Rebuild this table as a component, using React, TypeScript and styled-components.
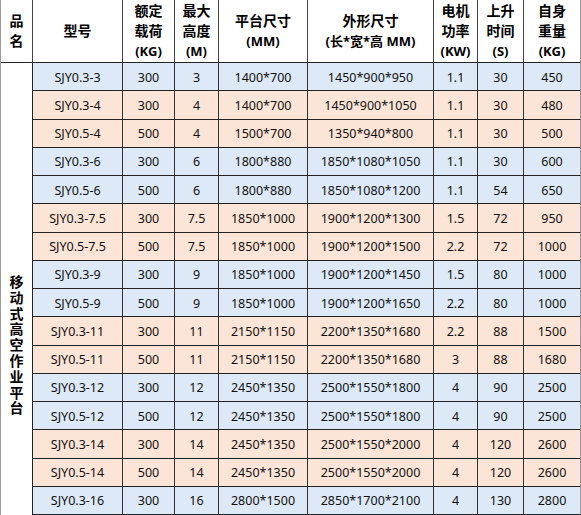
import React from "react";
import styled, { createGlobalStyle } from "styled-components";

const GlobalStyle = createGlobalStyle`
  html, body {
    margin: 0;
    padding: 0;
    background: #ffffff;
    overflow: hidden;
  }
  body {
    font-family: "Noto Sans", "Noto Sans CJK SC", sans-serif;
  }
`;

type Row = {
  model: string;
  load: string;
  height: string;
  platform: string;
  outer: string;
  power: string;
  time: string;
  weight: string;
  tone: "blue" | "peach";
};

const rows: Row[] = [
  { model: "SJY0.3-3", load: "300", height: "3", platform: "1400*700", outer: "1450*900*950", power: "1.1", time: "30", weight: "450", tone: "blue" },
  { model: "SJY0.3-4", load: "300", height: "4", platform: "1400*700", outer: "1450*900*1050", power: "1.1", time: "30", weight: "480", tone: "peach" },
  { model: "SJY0.5-4", load: "500", height: "4", platform: "1500*700", outer: "1350*940*800", power: "1.1", time: "30", weight: "500", tone: "peach" },
  { model: "SJY0.3-6", load: "300", height: "6", platform: "1800*880", outer: "1850*1080*1050", power: "1.1", time: "30", weight: "600", tone: "blue" },
  { model: "SJY0.5-6", load: "500", height: "6", platform: "1800*880", outer: "1850*1080*1200", power: "1.1", time: "54", weight: "650", tone: "blue" },
  { model: "SJY0.3-7.5", load: "300", height: "7.5", platform: "1850*1000", outer: "1900*1200*1300", power: "1.5", time: "72", weight: "950", tone: "peach" },
  { model: "SJY0.5-7.5", load: "500", height: "7.5", platform: "1850*1000", outer: "1900*1200*1500", power: "2.2", time: "72", weight: "1000", tone: "peach" },
  { model: "SJY0.3-9", load: "300", height: "9", platform: "1850*1000", outer: "1900*1200*1450", power: "1.5", time: "80", weight: "1000", tone: "blue" },
  { model: "SJY0.5-9", load: "500", height: "9", platform: "1850*1000", outer: "1900*1200*1650", power: "2.2", time: "80", weight: "1000", tone: "blue" },
  { model: "SJY0.3-11", load: "300", height: "11", platform: "2150*1150", outer: "2200*1350*1680", power: "2.2", time: "88", weight: "1500", tone: "peach" },
  { model: "SJY0.5-11", load: "500", height: "11", platform: "2150*1150", outer: "2200*1350*1680", power: "3", time: "88", weight: "1680", tone: "peach" },
  { model: "SJY0.3-12", load: "300", height: "12", platform: "2450*1350", outer: "2500*1550*1800", power: "4", time: "90", weight: "2500", tone: "blue" },
  { model: "SJY0.5-12", load: "500", height: "12", platform: "2450*1350", outer: "2500*1550*1800", power: "4", time: "90", weight: "2500", tone: "blue" },
  { model: "SJY0.3-14", load: "300", height: "14", platform: "2450*1350", outer: "2500*1550*2000", power: "4", time: "120", weight: "2600", tone: "peach" },
  { model: "SJY0.5-14", load: "500", height: "14", platform: "2450*1350", outer: "2500*1550*2000", power: "4", time: "120", weight: "2600", tone: "peach" },
  { model: "SJY0.3-16", load: "300", height: "16", platform: "2800*1500", outer: "2850*1700*2100", power: "4", time: "130", weight: "2800", tone: "blue" },
];

const headers: string[][] = [
  ["型号"],
  ["额定", "载荷", "(KG)"],
  ["最大", "高度", "(M)"],
  ["平台尺寸", "(MM)"],
  ["外形尺寸", "(长*宽*高 MM)"],
  ["电机", "功率", "(KW)"],
  ["上升", "时间", "(S)"],
  ["自身", "重量", "(KG)"],
];

const Sheet = styled.div`
  display: grid;
  grid-template-columns: 32px 90px 52px 44px 89px 126px 44px 46px 57px;
  grid-template-rows: 63px repeat(16, 28.25px);
  width: 581px;
  box-sizing: border-box;
  border-left: 1px solid #9a9a9a;
`;

const HeadCell = styled.div<{ $last?: boolean }>`
  display: flex;
  flex-direction: column;
  align-items: center;
  justify-content: center;
  box-sizing: border-box;
  border-right: 1px solid ${(p) => (p.$last ? "#9a9a9a" : "#444")};
  border-bottom: 1px solid #222;
  background: #ffffff;
  color: #000;
  font-family: "Noto Sans", "Noto Sans CJK SC", sans-serif;
  font-weight: 700;
  font-size: 14px;
  line-height: 20px;
  text-align: center;
  white-space: nowrap;
`;

const HeadLine = styled.span<{ $small?: boolean }>`
  display: block;
  font-size: ${(p) => (p.$small ? "13px" : "14px")};
`;

const NameCell = styled.div`
  grid-column: 1;
  grid-row: 2 / span 16;
  display: flex;
  justify-content: center;
  align-items: flex-start;
  padding-top: 211px;
  box-sizing: border-box;
  border-right: 1px solid #222;
  background: #ffffff;
`;

const VerticalText = styled.div`
  width: 15px;
  font-family: "Noto Sans CJK SC", sans-serif;
  font-weight: 700;
  font-size: 14px;
  line-height: 15.8px;
  text-align: center;
  word-break: break-all;
  color: #000;
`;

const DataCell = styled.div<{ $tone: "blue" | "peach"; $last?: boolean }>`
  display: flex;
  align-items: center;
  justify-content: center;
  box-sizing: border-box;
  padding-top: 1px;
  border-right: 1px solid ${(p) => (p.$last ? "#9a9a9a" : "#333")};
  border-bottom: 1px solid #222;
  background: ${(p) => (p.$tone === "blue" ? "#dde9f6" : "#fce4d6")};
  color: #111;
  font-family: "Noto Sans", "Noto Sans CJK SC", sans-serif;
  font-size: 12.5px;
  white-space: nowrap;
`;

export default function App() {
  return (
    <>
      <GlobalStyle />
      <Sheet>
        <HeadCell>
          <HeadLine>品</HeadLine>
          <HeadLine>名</HeadLine>
        </HeadCell>
        {headers.map((lines, i) => (
          <HeadCell key={i} $last={i === headers.length - 1}>
            {lines.map((l, j) => (
              <HeadLine key={j} $small={l.startsWith("(")}>
                {l}
              </HeadLine>
            ))}
          </HeadCell>
        ))}
        <NameCell>
          <VerticalText>移动式高空作业平台</VerticalText>
        </NameCell>
        {rows.map((r) => {
          const values = [r.model, r.load, r.height, r.platform, r.outer, r.power, r.time, r.weight];
          return values.map((v, i) => (
            <DataCell key={r.model + i} $tone={r.tone} $last={i === values.length - 1}>
              {v}
            </DataCell>
          ));
        })}
      </Sheet>
    </>
  );
}
